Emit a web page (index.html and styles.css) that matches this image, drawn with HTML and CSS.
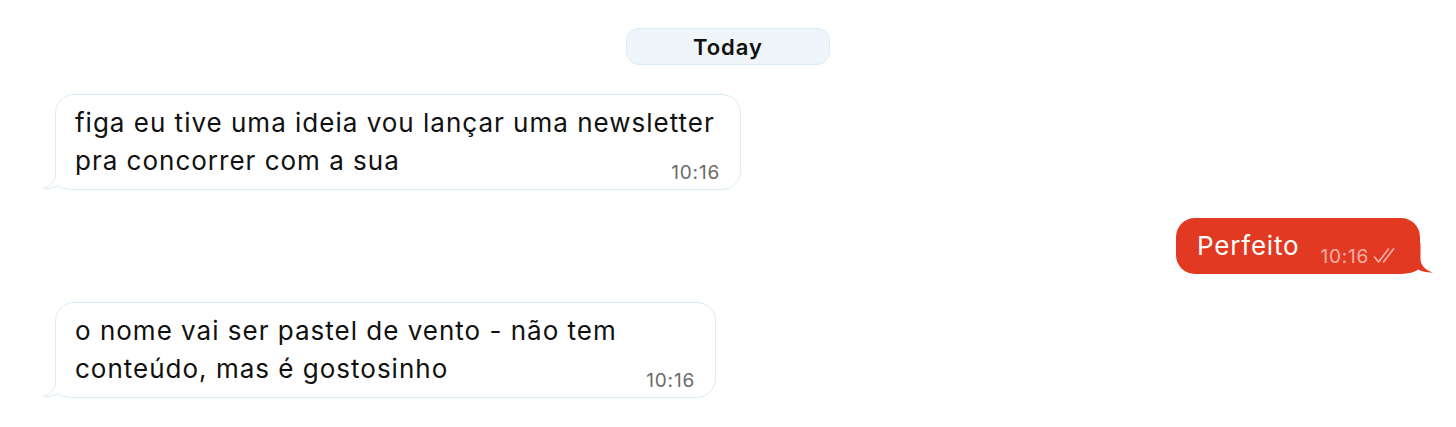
FILE: index.html
```html
<!DOCTYPE html>
<html lang="pt">
<head>
<meta charset="utf-8">
<title>Chat</title>
<link rel="stylesheet" href="styles.css">
</head>
<body>
<div class="chat">
  <div class="day"><span class="day-pill">Today</span></div>

  <div class="row in">
    <div class="bubble bubble-in w1">
      <svg class="tail tail-in" width="35" height="31" viewBox="0 0 35 31" aria-hidden="true">
        <path class="tail-fill" d="M15.5 0 L15.5 16 C15.5 22 11 27 3 29.5 C8 30 14 28.5 18 26.5 C21 29 26 30.5 34 30.5 L35 30.5 L35 0 Z"/>
        <path class="tail-line" d="M15.5 0 L15.5 16 C15.5 22 11 27 3 29.5 C8 30 14 28.5 18 26.5 C21 29 26 30.5 34 30.5 L35 30.5"/>
      </svg>
      <p class="text">
        <span class="line">figa eu tive uma ideia vou lançar uma newsletter</span>
        <span class="line last"><span class="words">pra concorrer com a sua</span><span class="meta">10:16</span></span>
      </p>
    </div>
  </div>

  <div class="row out">
    <div class="bubble bubble-out">
      <svg class="tail tail-out" width="35" height="31" viewBox="0 0 35 31" aria-hidden="true">
        <path class="tail-fill-red" d="M15.5 0 L15.5 16 C15.5 22 11 27 3 29.5 C8 30 14 28.5 18 26.5 C21 29 26 30.5 34 30.5 L35 30.5 L35 0 Z"/>
      </svg>
      <span class="text-out">Perfeito</span>
      <span class="meta-out">10:16
        <svg class="checks" width="24" height="17" viewBox="0 0 24 17" aria-hidden="true">
          <path d="M1.5 10 L5.5 15 L15.5 2 M10.5 15 L20.5 2" fill="none" stroke="currentColor" stroke-width="1.6" stroke-linecap="round" stroke-linejoin="round"/>
        </svg>
      </span>
    </div>
  </div>

  <div class="row in">
    <div class="bubble bubble-in w3">
      <svg class="tail tail-in" width="35" height="31" viewBox="0 0 35 31" aria-hidden="true">
        <path class="tail-fill" d="M15.5 0 L15.5 16 C15.5 22 11 27 3 29.5 C8 30 14 28.5 18 26.5 C21 29 26 30.5 34 30.5 L35 30.5 L35 0 Z"/>
        <path class="tail-line" d="M15.5 0 L15.5 16 C15.5 22 11 27 3 29.5 C8 30 14 28.5 18 26.5 C21 29 26 30.5 34 30.5 L35 30.5"/>
      </svg>
      <p class="text">
        <span class="line">o nome vai ser pastel de vento - não tem</span>
        <span class="line last"><span class="words">conteúdo, mas é gostosinho</span><span class="meta">10:16</span></span>
      </p>
    </div>
  </div>
</div>
</body>
</html>
```

FILE: styles.css
```css
html, body {
  margin: 0;
  padding: 0;
  background: #ffffff;
}

body {
  font-family: Inter, "Noto Sans", "DejaVu Sans", sans-serif;
  color: #111111;
}

.chat {
  display: flex;
  flex-direction: column;
  gap: 28px;
  padding: 28px 36px 0 55px;
}

.day {
  display: flex;
  justify-content: center;
  margin-left: -19px;
  margin-bottom: 1px;
}

.day-pill {
  box-sizing: border-box;
  width: 204px;
  height: 37px;
  display: flex;
  align-items: center;
  justify-content: center;
  background: #eff5f9;
  border: 1px solid #d6ecf5;
  border-radius: 13px;
  font-size: 22px;
  font-weight: 600;
  color: #111;
  letter-spacing: 1px;
}

.row {
  display: flex;
}

.row.out {
  justify-content: flex-end;
}

.bubble {
  position: relative;
  box-sizing: border-box;
}

.bubble-in {
  background: #ffffff;
  border: 1px solid #d9edf5;
  border-radius: 19px;
  height: 96px;
  padding: 9px 20px 0 19px;
}

.bubble-in.w1 { width: 686px; }
.bubble-in.w3 { width: 661px; }

.text {
  position: relative;
  z-index: 1;
  margin: 0;
  font-size: 26px;
  line-height: 38px;
  letter-spacing: 1px;
  color: #111;
}

.line {
  display: block;
  white-space: nowrap;
}

.line.last {
  display: flex;
  justify-content: space-between;
  align-items: flex-start;
}

.meta {
  margin-top: 21px;
  font-size: 19px;
  line-height: 20px;
  color: #6b6b6b;
  letter-spacing: 0.8px;
}

.tail {
  position: absolute;
  bottom: -1px;
}

.tail-in {
  left: -16px;
}

.tail-fill {
  fill: #ffffff;
}

.tail-line {
  fill: none;
  stroke: #d9edf5;
  stroke-width: 1;
}

.bubble-out {
  background: #e23a22;
  border-radius: 19px;
  height: 56px;
  width: 244px;
  display: flex;
  align-items: center;
  padding: 0 0 0 21px;
  color: #ffffff;
}

.tail-out {
  right: -16px;
  bottom: 0;
  transform: scaleX(-1);
}

.tail-fill-red {
  fill: #e23a22;
}

.text-out {
  position: relative;
  z-index: 1;
  font-size: 26px;
  line-height: 32px;
  letter-spacing: 0.8px;
  margin-top: -1px;
}

.meta-out {
  position: relative;
  z-index: 1;
  margin-left: 21px;
  margin-top: 22px;
  font-size: 19px;
  line-height: 20px;
  color: #f6b0a6;
  letter-spacing: 0.8px;
  display: inline-flex;
  align-items: center;
  gap: 4px;
}

.checks {
  color: #f6b0a6;
  margin-top: -3px;
}
```
